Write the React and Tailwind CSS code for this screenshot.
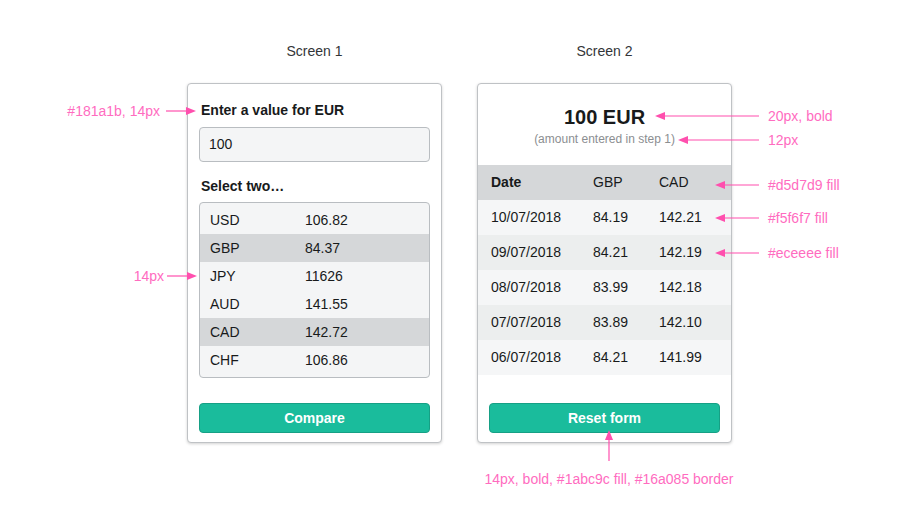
import React from 'react';

const rates = [
  { code: 'USD', value: '106.82', picked: false },
  { code: 'GBP', value: '84.37', picked: true },
  { code: 'JPY', value: '11626', picked: false },
  { code: 'AUD', value: '141.55', picked: false },
  { code: 'CAD', value: '142.72', picked: true },
  { code: 'CHF', value: '106.86', picked: false },
];

const history = [
  { date: '10/07/2018', gbp: '84.19', cad: '142.21' },
  { date: '09/07/2018', gbp: '84.21', cad: '142.19' },
  { date: '08/07/2018', gbp: '83.99', cad: '142.18' },
  { date: '07/07/2018', gbp: '83.89', cad: '142.10' },
  { date: '06/07/2018', gbp: '84.21', cad: '141.99' },
];

// pink arrow pointing right (tip at the right end)
const ArrowRight = ({ className, width }) => (
  <svg className={`absolute ${className}`} width={width} height="10" viewBox={`0 0 ${width} 10`}>
    <line x1="0" y1="5" x2={width - 8} y2="5" stroke="#ff4fae" strokeWidth="1.2" />
    <polygon points={`${width - 10},1 ${width},5 ${width - 10},9`} fill="#ff4fae" />
  </svg>
);

// pink arrow pointing left (tip at the left end)
const ArrowLeft = ({ className, width }) => (
  <svg className={`absolute ${className}`} width={width} height="10" viewBox={`0 0 ${width} 10`}>
    <line x1="8" y1="5" x2={width} y2="5" stroke="#ff4fae" strokeWidth="1.2" />
    <polygon points="0,5 10,1 10,9" fill="#ff4fae" />
  </svg>
);

const Note = ({ className, children }) => (
  <div className={`absolute text-[14px] leading-4 text-[#ff6cbf] whitespace-nowrap ${className}`}>
    {children}
  </div>
);

const Card = ({ children }) => (
  <div className="w-[255px] h-[360px] flex flex-col bg-white border border-[#bfc2c5] rounded-[4px] shadow-[0_1px_3px_rgba(0,0,0,0.18)] text-[#181a1b]">
    {children}
  </div>
);

const Button = ({ label }) => (
  <button className="h-[30px] w-full bg-[#1abc9c] border border-[#16a085] rounded-[4px] text-white text-[14px] font-bold">
    {label}
  </button>
);

const ScreenOne = () => (
  <Card>
    <div className="flex flex-col px-[11px] pt-4 pb-[9px]">
      <label className="text-[14px] leading-5 font-bold pl-[2px]">Enter a value for EUR</label>
      <div className="mt-[7px] h-[35px] flex items-center px-[9px] bg-[#f4f5f6] border border-[#b9bdc1] rounded-[4px] text-[14px]">
        100
      </div>
      <div className="mt-[14px] text-[14px] leading-5 font-bold pl-[2px]">Select two…</div>
      <div className="mt-[6px] py-[3px] bg-[#f4f5f6] border border-[#b9bdc1] rounded-[4px]">
        {rates.map((r) => (
          <div
            key={r.code}
            className={`h-[28px] grid grid-cols-[95px_1fr] items-center pl-[10px] text-[14px] ${r.picked ? 'bg-[#d5d7d9]' : ''}`}
          >
            <span>{r.code}</span>
            <span>{r.value}</span>
          </div>
        ))}
      </div>
      <div className="mt-[25px]">
        <Button label="Compare" />
      </div>
    </div>
  </Card>
);

const ScreenTwo = () => (
  <Card>
    <div className="flex flex-col pt-[19px] pb-[9px]">
      <div className="text-center text-[20px] leading-7 font-bold">100 EUR</div>
      <div className="text-center text-[12px] leading-4 text-[#8b8e91]">(amount entered in step 1)</div>
      <div className="mt-[18px] text-[14px]">
        <div className="h-[35px] grid grid-cols-[102px_66px_1fr] items-center pl-[13px] bg-[#d5d7d9]">
          <span className="font-bold">Date</span>
          <span>GBP</span>
          <span>CAD</span>
        </div>
        {history.map((h, i) => (
          <div
            key={h.date}
            className={`h-[35px] grid grid-cols-[102px_66px_1fr] items-center pl-[13px] ${i % 2 === 0 ? 'bg-[#f5f6f7]' : 'bg-[#eceeee]'}`}
          >
            <span>{h.date}</span>
            <span>{h.gbp}</span>
            <span>{h.cad}</span>
          </div>
        ))}
      </div>
      <div className="mt-[28px] px-[11px]">
        <Button label="Reset form" />
      </div>
    </div>
  </Card>
);

export default function App() {
  return (
    <div
      className="relative w-[917px] h-[520px] bg-white overflow-hidden"
      style={{ fontFamily: '"Liberation Sans", Arial, sans-serif' }}
    >
      <div className="flex gap-[35px] pl-[187px] pt-[41px]">
        <div className="flex flex-col items-center gap-[22px]">
          <div className="text-[14px] leading-5 text-[#333538]">Screen 1</div>
          <ScreenOne />
        </div>
        <div className="flex flex-col items-center gap-[22px]">
          <div className="text-[14px] leading-5 text-[#333538]">Screen 2</div>
          <ScreenTwo />
        </div>
      </div>

      {/* spec annotations */}
      <Note className="left-0 w-[160px] text-right top-[103px]">#181a1b, 14px</Note>
      <ArrowRight className="left-[166px] top-[106px]" width={30} />
      <Note className="left-0 w-[164px] text-right top-[268px]">14px</Note>
      <ArrowRight className="left-[167px] top-[271px]" width={30} />

      <ArrowLeft className="left-[655px] top-[111px]" width={104} />
      <Note className="left-[768px] top-[108px]">20px, bold</Note>
      <ArrowLeft className="left-[678px] top-[135px]" width={81} />
      <Note className="left-[768px] top-[132px]">12px</Note>
      <ArrowLeft className="left-[715px] top-[180px]" width={44} />
      <Note className="left-[768px] top-[177px]">#d5d7d9 fill</Note>
      <ArrowLeft className="left-[715px] top-[213px]" width={44} />
      <Note className="left-[768px] top-[210px]">#f5f6f7 fill</Note>
      <ArrowLeft className="left-[715px] top-[248px]" width={44} />
      <Note className="left-[768px] top-[245px]">#eceeee fill</Note>

      <svg className="absolute left-[604px] top-[430px]" width="10" height="31" viewBox="0 0 10 31">
        <line x1="5" y1="8" x2="5" y2="31" stroke="#ff4fae" strokeWidth="1.2" />
        <polygon points="5,0 1,10 9,10" fill="#ff4fae" />
      </svg>
      <Note className="left-[409px] w-[400px] text-center top-[471px]">14px, bold, #1abc9c fill, #16a085 border</Note>
    </div>
  );
}
